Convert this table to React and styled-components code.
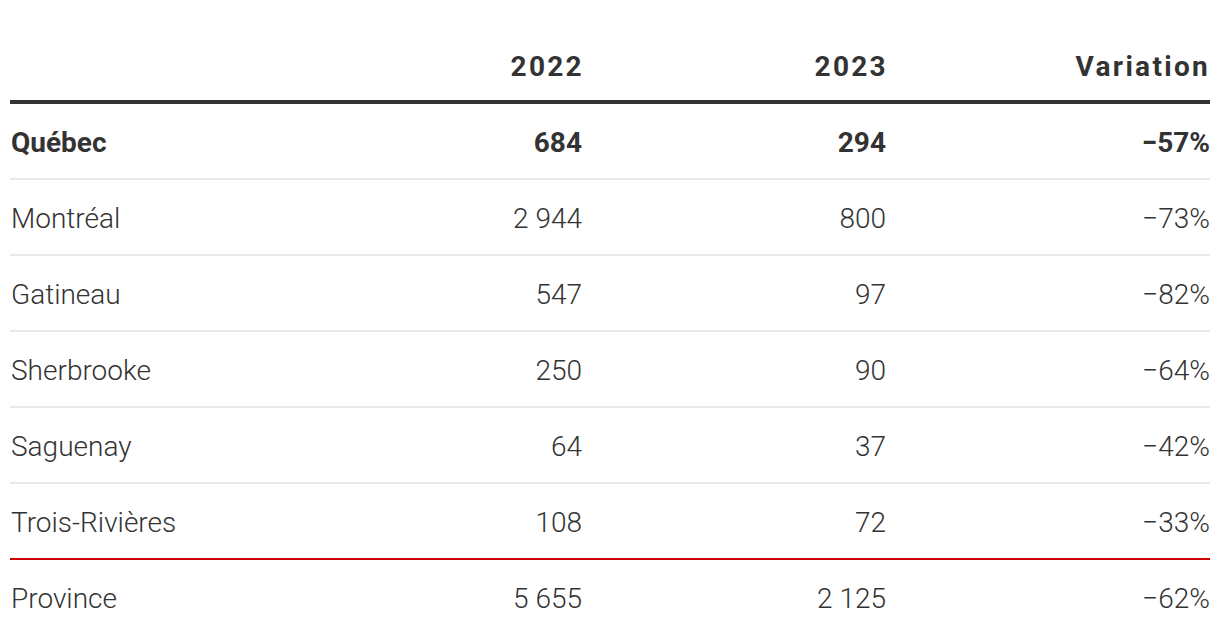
import React from "react";
import styled, { createGlobalStyle } from "styled-components";

const Global = createGlobalStyle`
  html, body { margin: 0; padding: 0; background: #fff; }
  body { font-family: Roboto, "Noto Sans", sans-serif; color: #333; }
`;

const Table = styled.div`
  width: 1200px;
  margin: 0 10px;
  display: grid;
  grid-template-columns: 270px 304px 304px 322px;
`;

const HeadCell = styled.div`
  height: 104px;
  box-sizing: border-box;
  display: flex;
  align-items: flex-end;
  justify-content: ${(p) => (p.$left ? "flex-start" : "flex-end")};
  padding: 0 0 15px 0;
  border-bottom: 4px solid #333;
  font-size: 28px;
  line-height: 36px;
  font-weight: 700;
  letter-spacing: 2.3px;
  color: #333;
`;

const Cell = styled.div`
  height: 76px;
  box-sizing: border-box;
  padding: 21px ${(p) => (p.$last ? "0" : "2px")} 17px ${(p) => (p.$left ? "1px" : "0")};
  text-align: ${(p) => (p.$left ? "left" : "right")};
  border-bottom: ${(p) =>
    p.$border === "red" ? "2px solid #cc0000" : p.$border === "none" ? "0" : "2px solid #e8e8e8"};
  font-size: 28px;
  line-height: 36px;
  font-weight: ${(p) => (p.$bold ? 700 : 300)};
  color: #333;
  white-space: nowrap;
`;

const rows = [
  { name: "Québec", a: "684", b: "294", v: "−57%", bold: true },
  { name: "Montréal", a: "2 944", b: "800", v: "−73%" },
  { name: "Gatineau", a: "547", b: "97", v: "−82%" },
  { name: "Sherbrooke", a: "250", b: "90", v: "−64%" },
  { name: "Saguenay", a: "64", b: "37", v: "−42%" },
  { name: "Trois-Rivières", a: "108", b: "72", v: "−33%", border: "red" },
  { name: "Province", a: "5 655", b: "2 125", v: "−62%", border: "none" },
];

export default function App() {
  return (
    <>
      <Global />
      <Table>
        <HeadCell $left />
        <HeadCell>2022</HeadCell>
        <HeadCell>2023</HeadCell>
        <HeadCell $last>Variation</HeadCell>
        {rows.map((r) => (
          <React.Fragment key={r.name}>
            <Cell $left $bold={r.bold} $border={r.border}>{r.name}</Cell>
            <Cell $bold={r.bold} $border={r.border}>{r.a}</Cell>
            <Cell $bold={r.bold} $border={r.border}>{r.b}</Cell>
            <Cell $last $bold={r.bold} $border={r.border}>{r.v}</Cell>
          </React.Fragment>
        ))}
      </Table>
    </>
  );
}
